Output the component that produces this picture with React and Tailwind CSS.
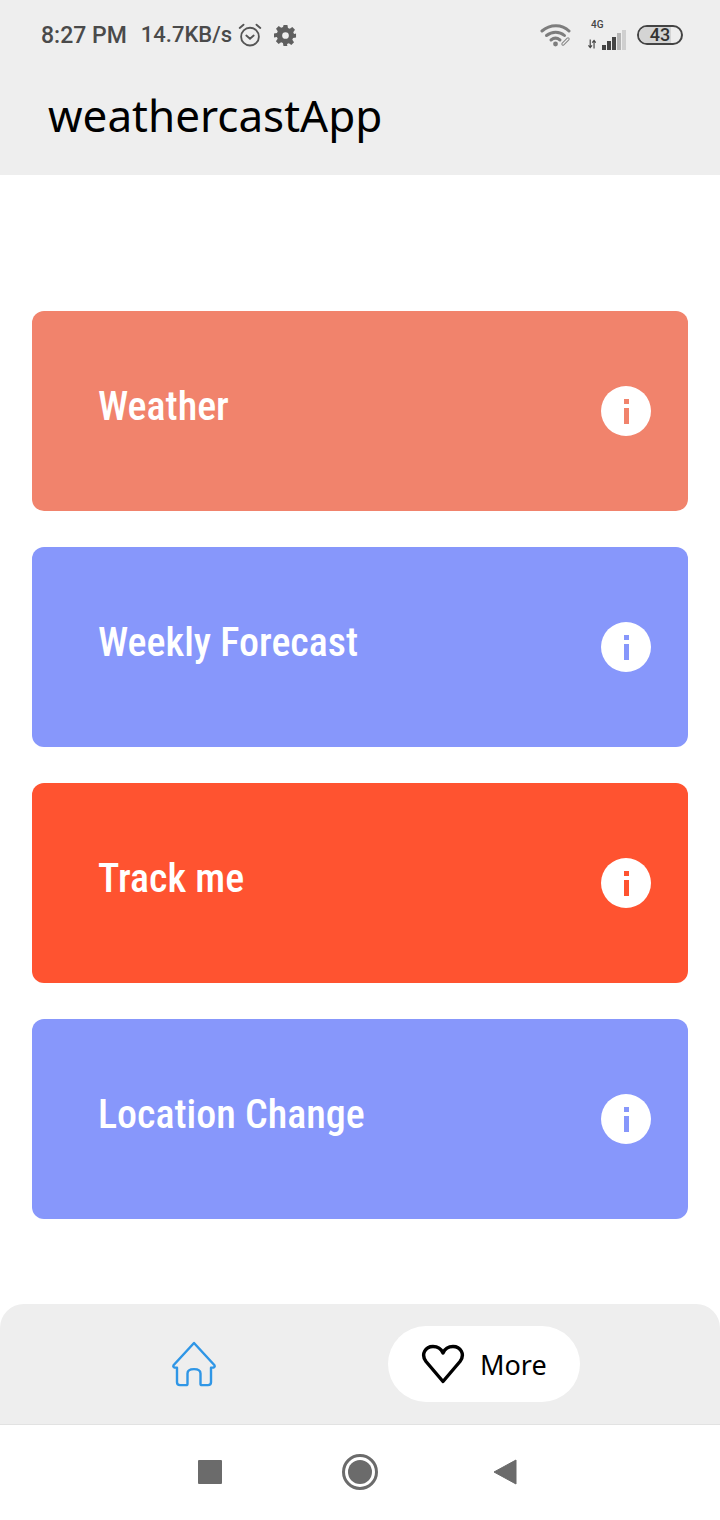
const cards = [
  { title: "Weather", bg: "bg-[#f1836c]", fg: "text-[#f1836c]" },
  { title: "Weekly Forecast", bg: "bg-[#8797fb]", fg: "text-[#8797fb]" },
  { title: "Track me", bg: "bg-[#ff5330]", fg: "text-[#ff5330]" },
  { title: "Location Change", bg: "bg-[#8797fb]", fg: "text-[#8797fb]" },
];

function StatusBar() {
  return (
    <div className="flex h-[70px] items-center justify-between pl-[41px] pr-[37px] font-['Roboto',sans-serif] text-[#4a4a4a]">
      <div className="flex items-center">
        <span className="text-[23px] font-medium leading-none">8:27 PM</span>
        <span className="ml-[14px] text-[22px] font-medium leading-none">14.7KB/s</span>
        <svg viewBox="0 0 24 24" className="ml-[5px] h-[26px] w-[26px]" fill="none" stroke="#555" strokeWidth="1.7" strokeLinecap="round">
          <circle cx="12" cy="13.5" r="8.2" />
          <path d="M8.6 12.5l3.4 3 3.4-3M2.5 5.5L6 2.5M21.5 5.5L18 2.5" />
        </svg>
        <svg viewBox="0 0 24 24" className="ml-[11px] h-[23px] w-[23px]" fill="#5f5f5f">
          <path fillRule="evenodd" d="M10 1h4l.6 3.1 1.9.8 2.6-1.800 2.800 2.800-1.800 2.600.8 1.900L23 10v4l-3.100.6-.8 1.900 1.800 2.600-2.800 2.800-2.600-1.800-1.900.8L13.900 23h-4l-.6-3.100-1.900-.8-2.600 1.800-2.800-2.800 1.800-2.600-.8-1.900L0 14v-4l3.100-.6.8-1.900L2.100 4.900l2.800-2.800 2.600 1.800 1.900-.8zM12 8.500a3.500 3.500 0 100 7 3.500 3.500 0 000-7z" />
        </svg>
      </div>
      <div className="flex items-center">
        <svg viewBox="0 0 32 26" className="h-[26px] w-[32px]" fill="none" strokeLinecap="round">
          <path d="M2 9c8-7 20-7 27 0" stroke="#7d7d7d" strokeWidth="3" />
          <path d="M6.500 13.500c5.500-4.500 13-4.500 18 0" stroke="#7d7d7d" strokeWidth="3" />
          <path d="M11 18c3-2.500 6-2.500 9 0" stroke="#7d7d7d" strokeWidth="3" />
          <circle cx="15.500" cy="22" r="2.400" fill="#7d7d7d" />
          <path d="M23 22l5-5" stroke="#8a8a8a" strokeWidth="3.400" />
          <path d="M23 22l5-5" stroke="#eeeeee" strokeWidth="1.200" />
        </svg>
        <div className="ml-[16px] flex w-[38px] flex-col">
          <span className="pl-[3px] text-[10px] font-medium leading-[10px] text-[#444]">4G</span>
          <div className="flex h-[20px] items-end">
            <svg viewBox="0 0 9 10" className="mb-[1px] h-[10px] w-[9px]" fill="none" stroke="#444" strokeWidth="1.300">
              <path d="M2.500 0v9M0.500 6.500l2 2.500 2-2.500M6.800 10V1M4.800 3.500l2-2.500 2 2.500" />
            </svg>
            <div className="ml-[6px] flex items-end gap-[1px]">
              <span className="h-[5px] w-[4px] bg-[#444]" />
              <span className="h-[9px] w-[4px] bg-[#444]" />
              <span className="h-[13px] w-[4px] bg-[#444]" />
              <span className="h-[17px] w-[4px] bg-[#b5b5b5]" />
              <span className="h-[20px] w-[4px] bg-[#cfcfcf]" />
            </div>
          </div>
        </div>
        <div className="relative ml-[11px] flex h-[20px] w-[46px] items-center justify-center overflow-hidden rounded-full border-2 border-[#444]">
          <span className="absolute inset-y-0 left-0 w-[32px] bg-[#d4d4d4]" />
          <span className="relative text-[18px] font-medium leading-none text-[#333]">43</span>
        </div>
      </div>
    </div>
  );
}

function InfoBadge({ fg }) {
  return (
    <div className="flex h-[50px] w-[50px] flex-col items-center justify-center rounded-full bg-white">
      <span className={`h-[5px] w-[5px] ${fg} bg-current`} />
      <span className={`mt-[4px] h-[16px] w-[5px] ${fg} bg-current`} />
    </div>
  );
}

function App() {
  return (
    <div className="flex h-[1520px] w-[720px] flex-col overflow-hidden bg-white">
      <header className="h-[175px] shrink-0 bg-[#eeeeee]">
        <StatusBar />
        <h1 className="mt-[18px] pl-[48px] font-['Noto_Sans',sans-serif] text-[44px] font-normal leading-[54px] text-black">
          weathercastApp
        </h1>
      </header>

      <main className="flex flex-1 flex-col gap-[36px] px-[32px] pt-[136px]">
        {cards.map((card) => (
          <div
            key={card.title}
            className={`flex h-[200px] items-center justify-between rounded-[12px] pl-[66px] pr-[37px] ${card.bg}`}
          >
            <span className="mb-[8px] font-['Roboto',sans-serif] text-[40px] font-medium leading-none text-white [font-stretch:75%]">
              {card.title}
            </span>
            <InfoBadge fg={card.fg} />
          </div>
        ))}
      </main>

      <nav className="flex h-[121px] shrink-0 items-center rounded-t-[24px] border-b border-[#e2e2e2] bg-[#eeeeee] pl-[171px]">
        <svg viewBox="0 0 46 46" className="h-[46px] w-[46px]" fill="none" stroke="#2f96e6" strokeWidth="2.400" strokeLinejoin="round" strokeLinecap="round">
          <path d="M23 1.500L43.500 24.500c.8 1.500-.5 2.500-2.500 2.500h-1v15c0 2-1 3-3 3h-6c-1 0-1.500-.5-1.500-1.500V33c0-3-2-4.500-6.500-4.500S16.500 30 16.500 33v10.500c0 1-.5 1.500-1.500 1.500H9c-2 0-3-1-3-3V27H5c-2 0-3.300-1-2.500-2.500z" transform="translate(0 0.500) scale(1 0.97)" />
        </svg>
        <div className="ml-[171px] flex h-[76px] w-[192px] items-center rounded-full bg-white pl-[33px]">
          <svg viewBox="0 0 44 40" className="h-[40px] w-[44px]" fill="none" stroke="#000" strokeWidth="3.400" strokeLinejoin="round">
            <path d="M22 37.500L5 17.500C-.5 10 4.500 2.500 12 2.500c4.200 0 8 2 10 6.500 2-4.500 5.800-6.500 10-6.500 7.500 0 12.500 7.500 7 15z" />
          </svg>
          <span className="ml-[15px] font-['Noto_Sans',sans-serif] text-[27px] leading-none text-black">More</span>
        </div>
      </nav>

      <div className="flex h-[95px] shrink-0 items-center pb-[2px] pl-[198px]">
        <span className="h-[24px] w-[24px] rounded-[1px] bg-[#6b6b6b]" />
        <span className="ml-[120px] flex h-[36px] w-[36px] items-center justify-center rounded-full border-[3px] border-[#6b6b6b]">
          <span className="h-[24px] w-[24px] rounded-full bg-[#6b6b6b]" />
        </span>
        <svg viewBox="0 0 24 26" className="ml-[115px] h-[26px] w-[24px]" fill="#6b6b6b">
          <path d="M23 1v24L1 13z" stroke="#6b6b6b" strokeLinejoin="round" />
        </svg>
      </div>
    </div>
  );
}

export default App;
